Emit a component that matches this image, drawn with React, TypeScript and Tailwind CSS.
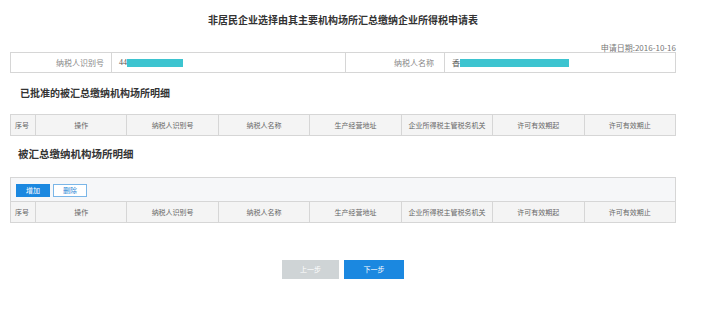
import React from "react";

const cols = ["序号", "操作", "纳税人识别号", "纳税人名称", "生产经营地址", "企业所得税主管税务机关", "许可有效期起", "许可有效期止"];

function HeaderRow() {
  return (
    <div className="flex h-[22px] border border-[#d6d6d6] bg-[#f4f4f4] text-[7px] text-[#666]">
      {cols.map((c, i) => (
        <div
          key={c}
          className={`flex items-center ${i === 0 ? "w-[24px] shrink-0 justify-start pl-[4px]" : "flex-1 justify-center"} ${i > 0 ? "border-l border-[#d6d6d6]" : ""}`}
        >
          {c}
        </div>
      ))}
    </div>
  );
}

export default function App() {
  return (
    <div
      className="w-[702px] h-[331px] bg-white"
      style={{ fontFamily: '"Noto Sans CJK SC", "Noto Sans", sans-serif' }}
    >
      <div className="ml-[10px] w-[666px] pt-[13px]">
        <div className="text-center text-[10px] font-bold text-[#333] leading-[14px]">
          非居民企业选择由其主要机构场所汇总缴纳企业所得税申请表
        </div>
        <div className="mt-[17px] text-right text-[8px] leading-[8px] text-[#777]">申请日期:2016-10-16</div>
        <div className="flex h-[21px] border border-[#d6d6d6] text-[8px] text-[#888]">
          <div className="w-[100px] shrink-0 flex items-center justify-end pr-[7px]">纳税人识别号</div>
          <div className="w-[234px] shrink-0 border-l border-[#d6d6d6] flex items-center pl-[7px]">
            <span className="text-[#555]" style={{ fontFamily: '"Liberation Serif", serif' }}>44</span>
            <span className="h-[8px] w-[56px] bg-[#3cc4d0]"></span>
          </div>
          <div className="w-[99px] shrink-0 border-l border-[#d6d6d6] flex items-center justify-end pr-[10px]">纳税人名称</div>
          <div className="flex-1 border-l border-[#d6d6d6] flex items-center pl-[7px]">
            <span className="text-[#555]">香</span>
            <span className="h-[8px] w-[109px] bg-[#3cc4d0]"></span>
          </div>
        </div>
        <div className="mt-[13px] ml-[10px] text-[10px] font-bold text-[#333] leading-[14px]">已批准的被汇总缴纳机构场所明细</div>
        <div className="mt-[14px]">
          <HeaderRow />
        </div>
        <div className="mt-[11px] ml-[8px] text-[10.5px] font-bold text-[#333] leading-[14px]">被汇总缴纳机构场所明细</div>
        <div className="mt-[16px] h-[24px] border border-b-0 border-[#d6d6d6] bg-[#f6f7f9] flex items-end pb-[4px] pl-[5px] gap-[3px]">
          <div className="w-[34px] h-[13px] bg-[#1b88e0] text-white text-[7px] flex items-center justify-center">增加</div>
          <div className="w-[34px] h-[13px] bg-white border border-[#7ab6e8] text-[#2a86d6] text-[7px] flex items-center justify-center">删除</div>
        </div>
        <HeaderRow />
        <div className="mt-[37px] flex justify-center gap-[5px]">
          <div className="w-[57px] h-[19px] bg-[#cfd4d6] text-white text-[7px] flex items-center justify-center">上一步</div>
          <div className="w-[60px] h-[19px] bg-[#1b88e0] text-white text-[7px] flex items-center justify-center">下一步</div>
        </div>
      </div>
    </div>
  );
}
